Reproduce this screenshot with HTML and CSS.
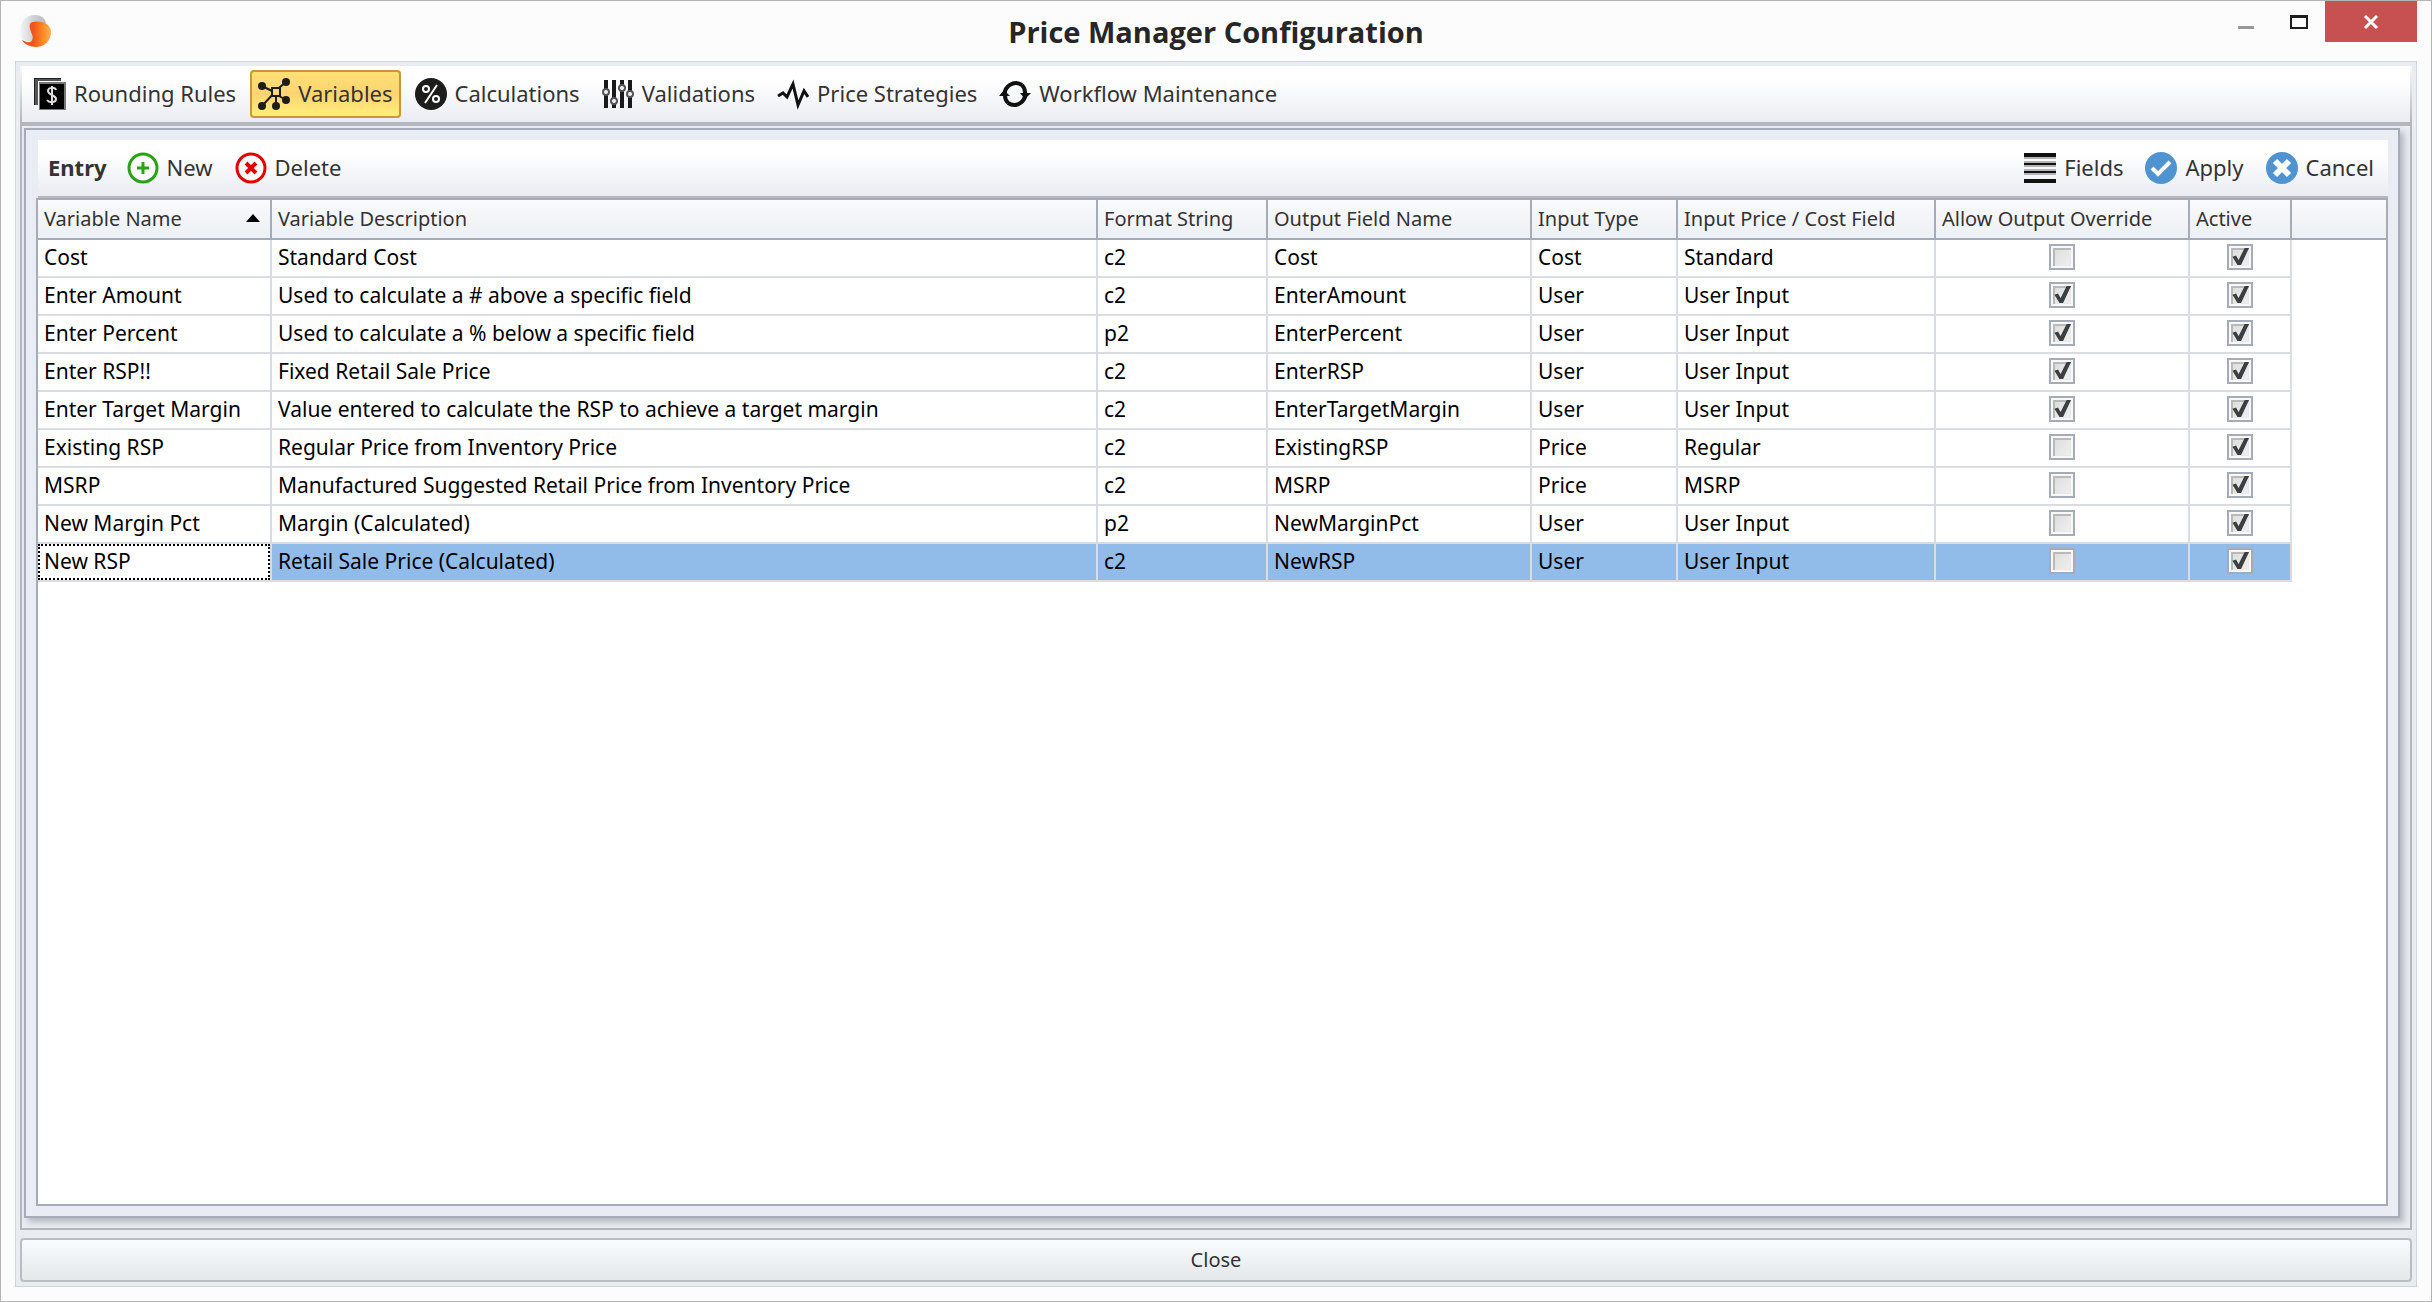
FILE: index.html
```html
<!DOCTYPE html>
<html lang="en">
<head>
<meta charset="utf-8">
<title>Price Manager Configuration</title>
<link rel="stylesheet" href="styles.css">
</head>
<body>
<div class="window">
  <header class="titlebar">
    <svg class="logo" viewBox="0 0 32 32" aria-hidden="true">
      <defs>
        <linearGradient id="silver" x1="0" y1="0" x2="1" y2="0"><stop offset="0" stop-color="#f4f5f5"/><stop offset=".5" stop-color="#cfd2d4"/><stop offset="1" stop-color="#b9bcbf"/></linearGradient>
        <linearGradient id="orange" x1="0" y1="0" x2="1" y2="0"><stop offset="0" stop-color="#e8501c"/><stop offset=".4" stop-color="#f0561c"/><stop offset=".75" stop-color="#fb8f24"/><stop offset="1" stop-color="#fdb25a"/></linearGradient>
      </defs>
      <path d="M3 24C-2 12 4 0 16 0c6 0 10 3 11 8H16c-2 5 1 10 0 15-1 4-7 5-13 1z" fill="url(#silver)"/>
      <path d="M11 9c2-3 8-3 15-1 4 2 6 6 6 9 0 9-7 15-15 15-6 0-12-3-14-7 3 1 5 3 8 2 4-2 3-6 1-10-1-3-2-6-1-8z" fill="url(#orange)"/>
    </svg>
    <h1>Price Manager Configuration</h1>
    <div class="controls">
      <button class="ctl" aria-label="Minimize"><svg width="18" height="18"><path d="M1 13h16v3H1z" fill="#999"/></svg></button>
      <button class="ctl" aria-label="Maximize"><svg width="18" height="18"><path d="M0 2h18v14H0zM2 5v9h14V5z" fill="#1e1e1e" fill-rule="evenodd"/></svg></button>
      <button class="ctl close" aria-label="Close window"><svg width="18" height="18"><path d="M3 3l12 12M15 3L3 15" stroke="#fff" stroke-width="3"/></svg></button>
    </div>
  </header>

  <main class="client">
    <nav class="toolbar main-bar">
      <button class="tool"><svg viewBox="0 0 32 32"><path d="M0 0h27v3H4v24H0z" fill="#555"/><path d="M0 0h27v1H1v26H0z" fill="#222"/><path d="M5 4h27v28H5z" fill="#777"/><path d="M6 6h24v25H6z"/><path d="M22 12c-1-3-8-3-8 1s8 4 8 8-7 4-9 1M18 8v19" fill="none" stroke="#ddd" stroke-width="2"/></svg><span>Rounding Rules</span></button>
      <button class="tool active"><svg viewBox="0 0 32 32"><path d="M4 8l12 6L28 4M4 28l12-13 12 7M18 14v14" fill="none" stroke="#1d1d1b" stroke-width="2"/><path d="M14 10h8v8h-8z" fill="#ffd774" stroke="#1d1d1b" stroke-width="2"/><g fill="#1d1d1b"><circle cx="4" cy="8" r="4"/><circle cx="28" cy="4" r="4"/><circle cx="4" cy="28" r="4"/><circle cx="18" cy="28" r="4"/><circle cx="28" cy="22" r="4"/></g></svg><span>Variables</span></button>
      <button class="tool"><svg viewBox="0 0 32 32"><circle cx="16" cy="16" r="16" fill="#1d1d1b"/><g fill="none" stroke="#fff" stroke-width="2"><circle cx="11" cy="11" r="3"/><circle cx="21" cy="21" r="3"/><path d="M22 7L10 25"/></g></svg><span>Calculations</span></button>
      <button class="tool"><svg viewBox="0 0 32 32"><path d="M4 2v28M12 2v28M20 2v28M28 2v28" stroke="#1a1a1a" stroke-width="4"/><g fill="#f2f3f6" stroke="#555" stroke-width="2"><circle cx="4" cy="14" r="3"/><circle cx="12" cy="23" r="3"/><circle cx="20" cy="10" r="3"/><circle cx="28" cy="16" r="3"/></g></svg><span>Validations</span></button>
      <button class="tool"><svg viewBox="0 0 32 32"><path d="M1 18l5-3 4 4 6-13 5 21 6-14 4 6" fill="none" stroke="#111" stroke-width="3"/></svg><span>Price Strategies</span></button>
      <button class="tool"><svg viewBox="0 0 32 32"><path d="M6 18a11 11 0 0 1 17-11M26 14a11 11 0 0 1-17 11M9 25a11 11 0 0 1-3-8M23 7a11 11 0 0 1 3 8" fill="none" stroke="#111" stroke-width="4"/><path d="M0 18l5-6 6 6zM21 15h11l-6 6z" fill="#111"/></svg><span>Workflow Maintenance</span></button>
    </nav>

    <div class="frame">
      <section class="panel">
        <div class="toolbar entry-bar">
          <h2>Entry</h2>
          <button class="tool"><svg viewBox="0 0 32 32"><circle cx="16" cy="16" r="14" fill="#fff" stroke="#2aa214" stroke-width="3"/><path d="M16 10v12M10 16h12" stroke="#2aa214" stroke-width="3"/></svg><span>New</span></button>
          <button class="tool"><svg viewBox="0 0 32 32"><circle cx="16" cy="16" r="14" fill="#fff" stroke="#e50000" stroke-width="3"/><path d="M11 11l10 10M21 11L11 21" stroke="#e50000" stroke-width="4"/></svg><span>Delete</span></button>
          <span class="spacer"></span>
          <button class="tool"><svg viewBox="0 0 32 32"><path d="M0 1h32v4H0zM0 11h32v2H0zM0 19h32v2H0zM0 27h32v4H0z" fill="#111"/><path d="M0 5h32v2H0zM0 9h32v2H0zM0 13h32v2H0zM0 17h32v2H0zM0 21h32v2H0z" fill="#b4b4b4"/></svg><span>Fields</span></button>
          <button class="tool"><svg viewBox="0 0 32 32"><circle cx="16" cy="16" r="16" fill="#4f94d0"/><path d="M7 16l6 6L25 10" fill="none" stroke="#fff" stroke-width="4"/></svg><span>Apply</span></button>
          <button class="tool"><svg viewBox="0 0 32 32"><circle cx="16" cy="16" r="16" fill="#4f94d0"/><path d="M9 9l14 14M23 9L9 23" stroke="#fff" stroke-width="6"/></svg><span>Cancel</span></button>
        </div>
        <div class="grid">
          <table>
            <colgroup><col class="c-name"><col class="c-desc"><col class="c-format"><col class="c-output"><col class="c-type"><col class="c-price"><col class="c-allow"><col class="c-active"><col></colgroup>
            <thead>
              <tr><th aria-sort="ascending"><span class="sorted">Variable Name<svg width="14" height="8"><path d="M0 8L7 0l7 8z"/></svg></span></th><th>Variable Description</th><th>Format String</th><th>Output Field Name</th><th>Input Type</th><th>Input Price / Cost Field</th><th>Allow Output Override</th><th>Active</th><th></th></tr>
            </thead>
            <tbody>
              <tr><td>Cost</td><td>Standard Cost</td><td>c2</td><td>Cost</td><td>Cost</td><td>Standard</td><td><input type="checkbox" aria-label="Allow output override"></td><td><input type="checkbox" aria-label="Active" checked></td></tr>
              <tr><td>Enter Amount</td><td>Used to calculate a # above a specific field</td><td>c2</td><td>EnterAmount</td><td>User</td><td>User Input</td><td><input type="checkbox" aria-label="Allow output override" checked></td><td><input type="checkbox" aria-label="Active" checked></td></tr>
              <tr><td>Enter Percent</td><td>Used to calculate a % below a specific field</td><td>p2</td><td>EnterPercent</td><td>User</td><td>User Input</td><td><input type="checkbox" aria-label="Allow output override" checked></td><td><input type="checkbox" aria-label="Active" checked></td></tr>
              <tr><td>Enter RSP!!</td><td>Fixed Retail Sale Price</td><td>c2</td><td>EnterRSP</td><td>User</td><td>User Input</td><td><input type="checkbox" aria-label="Allow output override" checked></td><td><input type="checkbox" aria-label="Active" checked></td></tr>
              <tr><td>Enter Target Margin</td><td>Value entered to calculate the RSP to achieve a target margin</td><td>c2</td><td>EnterTargetMargin</td><td>User</td><td>User Input</td><td><input type="checkbox" aria-label="Allow output override" checked></td><td><input type="checkbox" aria-label="Active" checked></td></tr>
              <tr><td>Existing RSP</td><td>Regular Price from Inventory Price</td><td>c2</td><td>ExistingRSP</td><td>Price</td><td>Regular</td><td><input type="checkbox" aria-label="Allow output override"></td><td><input type="checkbox" aria-label="Active" checked></td></tr>
              <tr><td>MSRP</td><td>Manufactured Suggested Retail Price from Inventory Price</td><td>c2</td><td>MSRP</td><td>Price</td><td>MSRP</td><td><input type="checkbox" aria-label="Allow output override"></td><td><input type="checkbox" aria-label="Active" checked></td></tr>
              <tr><td>New Margin Pct</td><td>Margin (Calculated)</td><td>p2</td><td>NewMarginPct</td><td>User</td><td>User Input</td><td><input type="checkbox" aria-label="Allow output override"></td><td><input type="checkbox" aria-label="Active" checked></td></tr>
              <tr class="selected"><td class="focused">New RSP</td><td>Retail Sale Price (Calculated)</td><td>c2</td><td>NewRSP</td><td>User</td><td>User Input</td><td><input type="checkbox" aria-label="Allow output override"></td><td><input type="checkbox" aria-label="Active" checked></td></tr>
            </tbody>
          </table>
        </div>
      </section>
    </div>
    <button class="close-button">Close</button>
  </main>
</div>
</body>
</html>
```
FILE: styles.css
```css
* { box-sizing: border-box; }

body {
  margin: 0;
  font-family: "Noto Sans", sans-serif;
  color: #333;
}

button {
  font: inherit;
  color: inherit;
  border: 0;
  padding: 0;
  background: none;
}

.window {
  display: flex;
  flex-direction: column;
  min-height: 100vh;
  padding: 0 14px 14px;
  border: 1px solid #b5b5b5;
  background: #fcfcfc;
}

/* Title bar */
.titlebar {
  display: grid;
  grid-template-columns: 1fr auto 1fr;
  height: 60px;
}

.logo {
  width: 32px;
  height: 32px;
  margin: 14px 0 0 4px;
}

.titlebar h1 {
  margin: 0;
  font: 700 29px/62px "Open Sans", sans-serif;
  color: #262626;
}

.controls {
  display: flex;
  justify-content: flex-end;
  align-items: flex-start;
}

.ctl {
  display: grid;
  place-items: center;
  width: 53px;
  height: 41px;
}

.ctl.close {
  width: 92px;
  background: #c75050;
}

/* Client area */
.client {
  flex: 1;
  display: flex;
  flex-direction: column;
  padding: 4px;
  border: 1px solid #d0d3d8;
  background: #e9ecf1;
}

.toolbar {
  display: flex;
  align-items: center;
  gap: 6px;
  padding: 0 6px 0 4px;
  background: linear-gradient(#fff 25%, #e9ecf2);
  font-size: 22px;
}

.main-bar {
  height: 60px;
  border: solid #b3b6bb;
  border-width: 0 2px 4px;
  border-image: linear-gradient(#fff, #b3b6bb 94%) 4;
}

.tool {
  display: flex;
  align-items: center;
  gap: 8px;
  height: 48px;
  padding: 0 8px;
  border-radius: 4px;
  white-space: nowrap;
}

.tool span { padding-bottom: 2px; }

.tool svg {
  width: 32px;
  height: 32px;
}

.tool.active {
  box-shadow: inset 0 0 0 2px #c8973c;
  background: linear-gradient(#ffe176, #ffd470 50%, #fff17c);
}

.frame {
  flex: 1;
  display: flex;
  padding: 2px 10px 10px 2px;
  border: solid #b3b6bb;
  border-width: 0 2px 2px;
}

.panel {
  flex: 1;
  display: flex;
  flex-direction: column;
  min-width: 0;
  padding: 10px;
  border: 2px solid #a5abb7;
  background: #e9ecf2;
  box-shadow: 4px 4px 6px #b4b8be;
}

.entry-bar {
  height: 58px;
  margin: 0 0 0 2px;
  border-bottom: 2px solid #b3b7be;
}

.entry-bar h2 {
  margin: 0 6px;
  padding-bottom: 2px;
  font-size: 22px;
  font-weight: 700;
}

.spacer { flex: 1; }

/* Data grid */
.grid {
  flex: 1;
  border: 2px solid #a5abb7;
  background: #fff;
}

table {
  width: 100%;
  table-layout: fixed;
  border-collapse: separate;
  border-spacing: 0;
}

.c-name { width: 234px; }
.c-desc { width: 826px; }
.c-format { width: 170px; }
.c-output { width: 264px; }
.c-type { width: 146px; }
.c-price { width: 258px; }
.c-allow { width: 254px; }
.c-active { width: 102px; }

th, td {
  padding: 0 6px 2px;
  border: solid #d9dce0;
  border-width: 0 2px 2px 0;
  text-align: left;
  white-space: nowrap;
}

th {
  height: 40px;
  border-color: #a5abb7;
  background: linear-gradient(#f8fafc, #edf0f4);
  font-size: 20px;
  font-weight: 400;
}

th:last-child { border-right: 0; }

td {
  height: 38px;
  font-size: 21px;
  line-height: 28px;
  color: #000;
}

.sorted {
  display: flex;
  align-items: center;
  justify-content: space-between;
  padding-right: 4px;
}

td:nth-child(n+7) { text-align: center; }

.selected td { background: #91bce9; }

.selected .focused {
  position: relative;
  background: #fff;
}

.focused::after {
  content: "";
  position: absolute;
  inset: 0;
  border: 2px dotted #000;
}

input[type="checkbox"] {
  appearance: none;
  display: block;
  width: 26px;
  height: 26px;
  margin: 0 auto;
  padding: 2px;
  border: 2px solid #a5abb7;
  background: linear-gradient(135deg, #dcdcdc, #f0f0f0) content-box, #f8f8f8;
}

input[type="checkbox"]::before {
  content: "";
  display: block;
  height: 18px;
  box-shadow: inset 2px 2px #b8bab8, inset -1px -1px #e8e8e8;
}

input[type="checkbox"]:checked::after {
  content: "";
  display: block;
  height: 18px;
  margin-top: -18px;
  background: #3c3f41;
  clip-path: polygon(8% 48%, 28% 42%, 42% 66%, 76% 0, 100% 0, 56% 94%, 36% 94%);
}

.close-button {
  height: 44px;
  margin-top: 8px;
  padding-bottom: 2px;
  border: 2px solid #babec3;
  border-radius: 4px;
  background: linear-gradient(#f8fcff, #e4e8eb);
  font-size: 20px;
}
```
